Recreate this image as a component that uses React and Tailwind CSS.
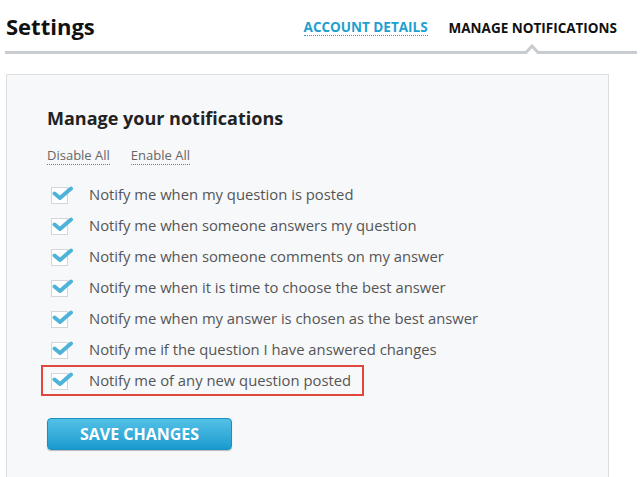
const items = [
  "Notify me when my question is posted",
  "Notify me when someone answers my question",
  "Notify me when someone comments on my answer",
  "Notify me when it is time to choose the best answer",
  "Notify me when my answer is chosen as the best answer",
  "Notify me if the question I have answered changes",
  "Notify me of any new question posted",
];

function Check() {
  return (
    <span className="relative block shrink-0 w-[21px] h-[19px]">
      <span className="absolute left-0 top-[2px] w-[17px] h-[17px] bg-white border border-[#d4d6d9]" />
      <svg className="absolute left-[1px] top-[1px]" width="22" height="16" viewBox="0 0 22 16">
        <path d="M2.5 7.5 L8 12 L19 2.5" fill="none" stroke="#4fb3d9" strokeWidth="4" strokeLinecap="round" strokeLinejoin="round" />
      </svg>
    </span>
  );
}

export default function App() {
  return (
    <div className="w-[641px] h-[477px] bg-white overflow-hidden font-['Open_Sans',sans-serif] text-[#333]">
      <header className="relative flex items-end justify-between pl-[1px] pr-[20px] pt-[15px] ml-[5px] mr-[4px] h-[54px] border-b-[3px] border-[#c8cbcf]">
        <h1 className="text-[22px] font-bold text-[#111] leading-none pb-[14px]">Settings</h1>
        <nav className="flex items-center gap-[21px] text-[13.5px] font-bold leading-none pb-[15px]">
          <span className="text-[#1f9fcf] border-b border-dotted border-[#1f9fcf] pb-[1px]">ACCOUNT DETAILS</span>
          <span className="text-[#111]">MANAGE NOTIFICATIONS</span>
        </nav>
        <svg className="absolute left-[519px] -bottom-[3px]" width="16" height="10" viewBox="0 0 16 10">
          <path d="M0 8.5 L2 8.5 L8 2 L14 8.5 L16 8.5 L16 10 L0 10 Z" fill="#fff" />
          <path d="M0 8.5 L2 8.5 L8 2 L14 8.5 L16 8.5" fill="none" stroke="#c8cbcf" strokeWidth="3" />
        </svg>
      </header>

      <section className="ml-[6px] w-[603px] mt-[20px] h-[420px] bg-[#f7f8fa] border border-[#dcdee0] pl-[40px] pt-[34px]">
        <h2 className="text-[18px] font-bold text-[#222] leading-none">Manage your notifications</h2>
        <div className="flex gap-[21px] mt-[22px] text-[13px] text-[#666] leading-none">
          <span className="border-b border-dotted border-[#777] pb-[2px]">Disable All</span>
          <span className="border-b border-dotted border-[#777] pb-[2px]">Enable All</span>
        </div>
        <ul className="mt-[14px] -ml-[6px]">
          {items.map((t, i) => (
            <li
              key={t}
              className={
                "flex items-center gap-[17px] h-[31px] pl-[8px] " +
                (i === items.length - 1 ? "w-[323px] border-2 border-[#e0473f] pl-[6px]" : "border-2 border-transparent")
              }
            >
              <Check />
              <span className="text-[14.8px] text-[#555] whitespace-nowrap">{t}</span>
            </li>
          ))}
        </ul>
        <button className="mt-[22px] w-[185px] h-[32px] rounded-[4px] bg-gradient-to-b from-[#52c1e6] to-[#169bcf] border border-[#1a8fc0] shadow-[0_1px_1px_rgba(0,0,0,0.25)] text-white text-[16px] font-bold leading-none">
          SAVE CHANGES
        </button>
      </section>
    </div>
  );
}
